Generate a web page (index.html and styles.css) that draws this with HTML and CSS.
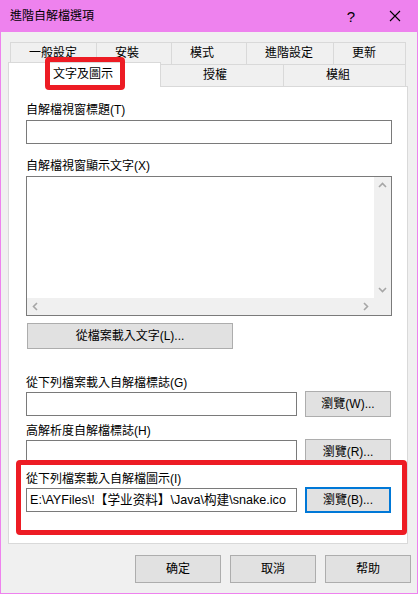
FILE: index.html
```html
<!DOCTYPE html>
<html lang="zh-Hant">
<head>
<meta charset="utf-8">
<title>進階自解檔選項</title>
<link rel="stylesheet" href="styles.css">
</head>
<body>
<div class="window">
  <div class="titlebar">
    <span class="title">進階自解檔選項</span>
    <span class="cap-btn help">?</span>
    <span class="cap-btn close"><svg width="12" height="12" viewBox="0 0 12 12"><path d="M1 1L11 11M11 1L1 11" stroke="#000" stroke-width="1.1" fill="none"/></svg></span>
  </div>
  <div class="client">
    <div class="tabctl">
      <div class="tabrow row1">
        <div class="tab">一般設定</div>
        <div class="tab">安裝</div>
        <div class="tab">模式</div>
        <div class="tab">進階設定</div>
        <div class="tab last">更新</div>
      </div>
      <div class="tabrow row2">
        <div class="tab active">文字及圖示</div>
        <div class="tab">授權</div>
        <div class="tab last">模組</div>
      </div>
      <div class="panel">
        <div class="label">自解檔視窗標題(T)</div>
        <div class="textbox wide"></div>
        <div class="label gap14">自解檔視窗顯示文字(X)</div>
        <div class="textarea">
          <div class="ta-content"></div>
          <div class="vscroll">
            <span class="arrow"><svg width="17" height="17" viewBox="0 0 17 17"><polyline points="5,10 8.5,6.5 12,10" fill="none" stroke="#a6a6a6" stroke-width="1.6"/></svg></span>
            <span class="arrow"><svg width="17" height="17" viewBox="0 0 17 17"><polyline points="5,7 8.5,10.5 12,7" fill="none" stroke="#a6a6a6" stroke-width="1.6"/></svg></span>
          </div>
          <div class="hscroll">
            <span class="arrow"><svg width="17" height="17" viewBox="0 0 17 17"><polyline points="10,5 6.5,8.5 10,12" fill="none" stroke="#a6a6a6" stroke-width="1.6"/></svg></span>
            <span class="arrow"><svg width="17" height="17" viewBox="0 0 17 17"><polyline points="7,5 10.5,8.5 7,12" fill="none" stroke="#a6a6a6" stroke-width="1.6"/></svg></span>
          </div>
          <div class="corner"></div>
        </div>
        <div class="btn loadtext">從檔案載入文字(L)...</div>
        <div class="label gap26">從下列檔案載入自解檔標誌(G)</div>
        <div class="row">
          <div class="textbox narrow"></div>
          <div class="btn browse">瀏覽(W)...</div>
        </div>
        <div class="label gap6">高解析度自解檔標誌(H)</div>
        <div class="row">
          <div class="textbox narrow"></div>
          <div class="btn browse">瀏覽(R)...</div>
        </div>
        <div class="label gap6">從下列檔案載入自解檔圖示(I)</div>
        <div class="row">
          <div class="textbox narrow value">E:\AYFiles\!【学业资料】\Java\构建\snake.ico</div>
          <div class="btn browse default">瀏覽(B)...</div>
        </div>
      </div>
    </div>
    <div class="actions">
      <div class="btn action">确定</div>
      <div class="btn action">取消</div>
      <div class="btn action">帮助</div>
    </div>
  </div>
  <div class="mark mark-tab"></div>
  <div class="mark mark-icon"></div>
</div>
</body>
</html>
```

FILE: styles.css
```css
html, body {
  margin: 0;
  padding: 0;
  background: #f0f0f0;
}

body {
  font-family: "Liberation Sans", "Noto Sans CJK TC", sans-serif;
  font-size: 12px;
  color: #000;
}

.window {
  position: relative;
  width: 418px;
  height: 594px;
  box-sizing: border-box;
  border: 1px solid #ee82ee;
  border-top: 0;
  background: #f0f0f0;
}

.titlebar {
  height: 32px;
  background: #ee82ee;
  display: flex;
  align-items: center;
  padding-left: 9px;
}

.title {
  flex: 1;
  line-height: 16px;
}

.cap-btn {
  width: 44px;
  height: 32px;
  display: flex;
  align-items: center;
  justify-content: center;
}

.help {
  font-size: 15px;
}

.close svg {
  display: block;
}

.client {
  padding-top: 10px;
}

.tabctl {
  margin-left: 7px;
  width: 400px;
}

.tabrow {
  display: grid;
  margin-left: 2px;
  width: 396px;
  height: 22px;
  grid-template-rows: 22px;
}

.row1 {
  grid-template-columns: 86px 75px 75px 87px 73px;
}

.row2 {
  grid-template-columns: 150px 123px 123px;
}

.tab {
  box-sizing: border-box;
  height: 22px;
  border-top: 1px solid #d9d9d9;
  border-left: 1px solid #d9d9d9;
  line-height: 21px;
  white-space: nowrap;
}

.tab.last {
  border-right: 1px solid #d9d9d9;
}

.row1 .tab {
  padding-left: 18px;
}

.row2 .tab {
  padding-left: 42px;
}

.row2 .tab.active {
  position: relative;
  z-index: 2;
  margin-left: -2px;
  margin-top: -2px;
  width: 153px;
  height: 25px;
  background: #fff;
  border-right: 1px solid #d9d9d9;
  line-height: 22px;
  padding-left: 44px;
}

.panel {
  box-sizing: border-box;
  border: 1px solid #d9d9d9;
  background: #fff;
  padding: 15px 15px 30px 17px;
}

.label {
  line-height: 16px;
  margin-bottom: 2px;
  white-space: nowrap;
}

.gap14 { margin-top: 14px; }
.gap26 { margin-top: 26px; margin-bottom: 0; }
.gap6 { margin-top: 6px; margin-bottom: 0; }

.textbox {
  box-sizing: border-box;
  height: 24px;
  border: 1px solid #7a7a7a;
  background: #fff;
}

.textbox.wide {
  width: 366px;
}

.textbox.narrow {
  width: 271px;
  margin-top: 1px;
}

.textbox.value {
  font-family: "Liberation Sans", "Noto Sans CJK SC", sans-serif;
  font-size: 12.6px;
  line-height: 22px;
  padding-left: 3px;
  white-space: nowrap;
  overflow: hidden;
}

.textarea {
  box-sizing: border-box;
  width: 366px;
  height: 140px;
  border: 1px solid #7a7a7a;
  display: grid;
  grid-template-columns: 1fr 17px;
  grid-template-rows: 1fr 17px;
}

.ta-content {
  background: #fff;
}

.vscroll, .hscroll, .corner {
  background: #f0f0f0;
}

.vscroll {
  display: flex;
  flex-direction: column;
  justify-content: space-between;
}

.hscroll {
  display: flex;
  justify-content: space-between;
}

.arrow {
  display: block;
  width: 17px;
  height: 17px;
}

.arrow svg {
  display: block;
}

.btn {
  box-sizing: border-box;
  height: 26px;
  border: 1px solid #adadad;
  background: #e1e1e1;
  display: flex;
  align-items: center;
  justify-content: center;
  white-space: nowrap;
  line-height: 16px;
}

.btn.loadtext {
  width: 206px;
  margin: 7px 0 0 1px;
}

.row {
  display: flex;
  align-items: flex-start;
  gap: 8px;
}

.btn.browse {
  width: 86px;
}

.btn.default {
  border: 2px solid #0078d7;
}

.actions {
  display: flex;
  justify-content: flex-end;
  gap: 9px;
  margin-top: 11px;
  padding-right: 6px;
}

.btn.action {
  width: 86px;
  height: 28px;
  font-size: 12px;
}

.mark {
  position: absolute;
  box-sizing: border-box;
  border: 5px solid #ed1c24;
  border-radius: 4px;
  z-index: 5;
}

.mark-tab {
  left: 44px;
  top: 57px;
  width: 80px;
  height: 33px;
}

.mark-icon {
  left: 15px;
  top: 460px;
  width: 391px;
  height: 75px;
}
```
